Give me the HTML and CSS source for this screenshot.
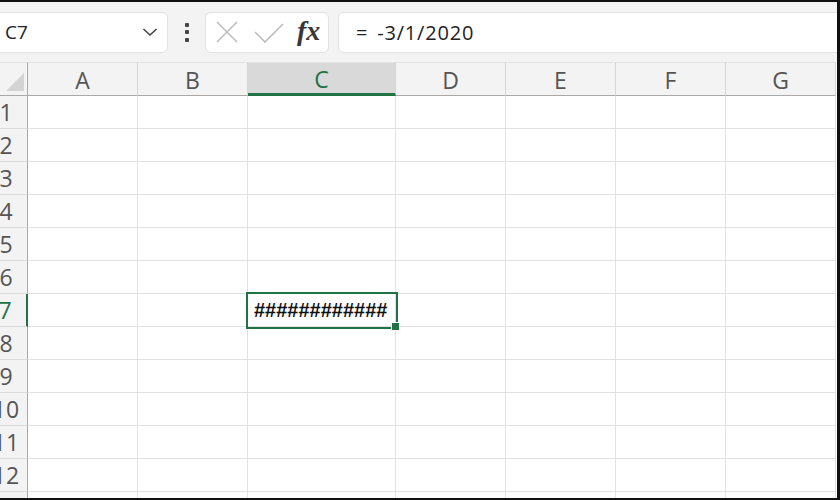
FILE: index.html
```html
<!DOCTYPE html>
<html lang="en">
<head>
  <meta charset="UTF-8" />
  <meta name="viewport" content="width=device-width, initial-scale=1" />
  <title>Book1 - Excel</title>
  <link rel="stylesheet" href="styles.css">
</head>
<body>
  <div class="window">

    <!-- barra de fórmulas -->
    <div class="formula-bar">
      <div class="name-box">
        <span class="name-value">C7</span>
        <svg class="chevron" width="16" height="10" viewBox="0 0 16 10">
          <path d="M1.5 2 L8 8 L14.5 2" fill="none" stroke="#444" stroke-width="1.6"/>
        </svg>
      </div>

      <div class="more-dots">
        <span></span><span></span><span></span>
      </div>

      <div class="fx-box">
        <svg class="icon-cancel" width="22" height="22" viewBox="0 0 22 22">
          <path d="M1 1 L21 21 M21 1 L1 21" stroke="#bdbdbd" stroke-width="1.6" fill="none"/>
        </svg>
        <svg class="icon-enter" width="30" height="20" viewBox="0 0 30 20">
          <path d="M1 9 L11 19 L29 1" stroke="#bdbdbd" stroke-width="1.6" fill="none"/>
        </svg>
        <span class="fx">fx</span>
      </div>

      <div class="formula-input">= -3/1/2020</div>
    </div>

    <!-- planilha -->
    <div class="sheet" id="sheet">
      <div class="corner"><span class="corner-tri"></span></div>
    </div>

  </div>

  <script>
    const cols = ['A', 'B', 'C', 'D', 'E', 'F', 'G'];
    const sheet = document.getElementById('sheet');
    const activeCol = 'C';
    const activeRow = 7;

    cols.forEach(c => {
      const h = document.createElement('div');
      h.className = 'col-head' + (c === activeCol ? ' selected' : '');
      h.textContent = c;
      sheet.appendChild(h);
    });

    for (let r = 1; r <= 13; r++) {
      const rh = document.createElement('div');
      rh.className = 'row-head' + (r === activeRow ? ' selected' : '');
      rh.innerHTML = '<span>' + r + '</span>';
      sheet.appendChild(rh);

      cols.forEach(c => {
        const cell = document.createElement('div');
        cell.className = 'cell';
        if (c === activeCol && r === activeRow) {
          cell.className += ' active';
          cell.textContent = '############';
        }
        sheet.appendChild(cell);
      });
    }
  </script>
</body>
</html>
```

FILE: styles.css
```css
* { box-sizing: border-box; }

body {
  margin: 0;
  background: #111;
  font-family: 'Open Sans', 'Noto Sans', sans-serif;
}

.window {
  width: 840px;
  height: 500px;
  border-top: 2px solid #111;
  border-right: 3px solid #111;
  border-bottom: 2px solid #111;
  background: #fff;
  overflow: hidden;
  display: flex;
  flex-direction: column;
}

/* ---- barra de fórmulas ---- */
.formula-bar {
  height: 60px;
  flex: none;
  background: #f3f3f3;
  display: flex;
  align-items: center;
}

.name-box {
  margin-left: -10px;
  width: 178px;
  height: 41px;
  background: #fff;
  border: 1px solid #e2e2e2;
  border-radius: 6px;
  display: flex;
  align-items: center;
  padding-left: 14px;
  padding-right: 9px;
}

.name-value {
  flex: 1;
  font-size: 19px;
  color: #222;
}

.chevron { display: block; }

.more-dots {
  width: 37px;
  display: flex;
  flex-direction: column;
  align-items: center;
  gap: 3.5px;
}

.more-dots span {
  width: 4px;
  height: 4px;
  background: #444;
  border-radius: 1px;
}

.fx-box {
  width: 124px;
  height: 41px;
  background: #fff;
  border: 1px solid #e2e2e2;
  border-radius: 6px;
  display: flex;
  align-items: center;
  padding-left: 10px;
}

.icon-cancel { margin-right: 16px; }
.icon-enter { margin-right: 13px; margin-top: 2px; }

.fx {
  font-family: 'Liberation Serif', 'DejaVu Serif', serif;
  font-style: italic;
  font-weight: bold;
  font-size: 28px;
  color: #383838;
  margin-top: -2px;
}

.formula-input {
  flex: 1;
  margin-left: 9px;
  margin-right: -10px;
  height: 41px;
  background: #fff;
  border: 1px solid #e2e2e2;
  border-radius: 6px;
  padding-left: 17px;
  display: flex;
  align-items: center;
  font-size: 20px;
  color: #222;
  letter-spacing: 0.8px;
  word-spacing: 3px;
}

/* ---- grade ---- */
.sheet {
  flex: 1;
  display: grid;
  grid-template-columns: 28px 110px 110px 148px 110px 110px 110px 110px;
  grid-template-rows: 34px repeat(13, 33px);
  overflow: hidden;
}

.corner {
  background: #f3f3f3;
  border-right: 1px solid #a9a9a9;
  border-bottom: 1px solid #a9a9a9;
  border-top: 1px solid #e4e4e4;
  position: relative;
}

.corner-tri {
  position: absolute;
  right: 3px;
  bottom: 4px;
  width: 18px;
  height: 18px;
  background: #d4d4d4;
  clip-path: polygon(100% 0, 100% 100%, 0 100%);
}

.col-head {
  background: #f3f3f3;
  border-top: 1px solid #e4e4e4;
  border-right: 1px solid #d6d6d6;
  border-bottom: 1px solid #a9a9a9;
  display: flex;
  align-items: center;
  justify-content: center;
  font-size: 23px;
  color: #555;
  padding-top: 2px;
}

.col-head.selected {
  background: #d9d9d9;
  color: #217346;
  border-bottom: 3px solid #217346;
}

.row-head {
  background: #f3f3f3;
  border-right: 1px solid #a9a9a9;
  border-bottom: 1px solid #dcdcdc;
  display: flex;
  justify-content: flex-end;
  align-items: center;
  font-size: 23px;
  color: #555;
}

.row-head span {
  flex: none;
  width: 42px;
  text-align: center;
}

.row-head.selected {
  color: #217346;
  border-right: 2px solid #217346;
}

.cell {
  border-right: 1px solid #e1e1e1;
  border-bottom: 1px solid #e1e1e1;
}

.cell.active {
  position: relative;
  z-index: 1;
  outline: 2px solid #217346;
  font-family: 'Liberation Sans', Arial, sans-serif;
  font-weight: bold;
  font-size: 20px;
  color: #111;
  display: flex;
  align-items: center;
  padding-left: 6px;
  white-space: nowrap;
}

/* alça de preenchimento */
.cell.active::after {
  content: '';
  position: absolute;
  right: -5px;
  bottom: -5px;
  width: 7px;
  height: 7px;
  background: #217346;
  border: 1px solid #fff;
}
```
